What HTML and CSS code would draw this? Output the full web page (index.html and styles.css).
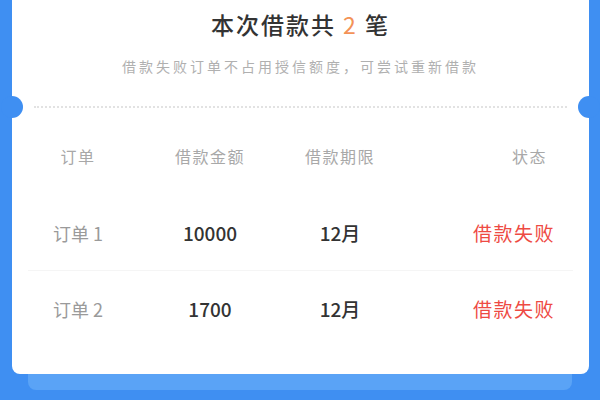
FILE: index.html
```html
<!DOCTYPE html>
<html lang="zh-CN">
  <head>
    <meta charset="UTF-8" />
    <meta name="viewport" content="width=device-width, initial-scale=1.0" />
    <title>借款结果</title>
    <link rel="stylesheet" href="styles.css">
  </head>
  <body>
    <div class="page">
      <div class="card">
        <h1 class="title">本次借款共 <span class="count">2</span> 笔</h1>
        <p class="tip">借款失败订单不占用授信额度，可尝试重新借款</p>

        <!-- ticket style cut with a notch on each side -->
        <div class="divider">
          <span class="notch left"></span>
          <span class="notch right"></span>
        </div>

        <div class="table">
          <div class="row head">
            <span>订单</span>
            <span>借款金额</span>
            <span>借款期限</span>
            <span class="status">状态</span>
          </div>
          <div class="row item">
            <span class="order">订单 1</span>
            <span class="num">10000</span>
            <span class="num">12月</span>
            <span class="status fail">借款失败</span>
          </div>
          <div class="row item">
            <span class="order">订单 2</span>
            <span class="num">1700</span>
            <span class="num">12月</span>
            <span class="status fail">借款失败</span>
          </div>
        </div>
      </div>
      <div class="card-shadow"></div>
    </div>
  </body>
</html>
```

FILE: styles.css
```css
body {
  margin: 0;
  background: #3f8ff2;
  font-family: "Noto Sans CJK SC", "Noto Sans", sans-serif;
  color: #333;
}
.page {
  padding: 0 11px 0 12px;
}
.card {
  background: #fff;
  border-radius: 0 0 8px 8px;
  padding: 9px 0 28px;
}
.title {
  margin: 0;
  font-size: 23px;
  font-weight: 500;
  line-height: 30px;
  letter-spacing: 2px;
  text-align: center;
  color: #333;
}
.count {
  color: #f39257;
  font-weight: 400;
}
.tip {
  margin: 17px 0 0;
  font-size: 14px;
  line-height: 20px;
  letter-spacing: 3px;
  text-align: center;
  color: #b0b0b0;
}
.divider {
  position: relative;
  height: 20px;
  margin-top: 21px;
}
.divider::before {
  content: "";
  position: absolute;
  left: 22px;
  right: 22px;
  top: 9px;
  border-top: 2px dotted #e2e2e2;
}
.notch {
  position: absolute;
  top: -1px;
  width: 22px;
  height: 22px;
  border-radius: 50%;
  background: #3f8ff2;
}
.notch.left {
  left: -11px;
}
.notch.right {
  right: -11px;
}
.table {
  margin: 0 16px;
}
.row {
  display: grid;
  grid-template-columns: 100px 164px 96px 1fr;
  align-items: center;
  padding-right: 18px;
}
.row span {
  text-align: center;
}
.row .status {
  text-align: right;
}
.head {
  height: 78px;
  font-size: 16px;
  color: #a8a8a8;
  letter-spacing: 1.5px;
}
.head .status {
  padding-right: 8px;
}
.item {
  height: 75px;
  border-top: 1px solid #f5f5f5;
}
.item:nth-child(2) {
  border-top: 0;
}
.order {
  font-size: 18px;
  color: #9a9a9a;
}
.num {
  font-size: 19px;
  font-weight: 500;
  color: #333;
}
.fail {
  font-size: 19px;
  color: #ee4a43;
  letter-spacing: 1.5px;
}
.card-shadow {
  height: 16px;
  margin: 0 17px 0 16px;
  background: #5aa3f6;
  border-radius: 0 0 8px 8px;
}
```
